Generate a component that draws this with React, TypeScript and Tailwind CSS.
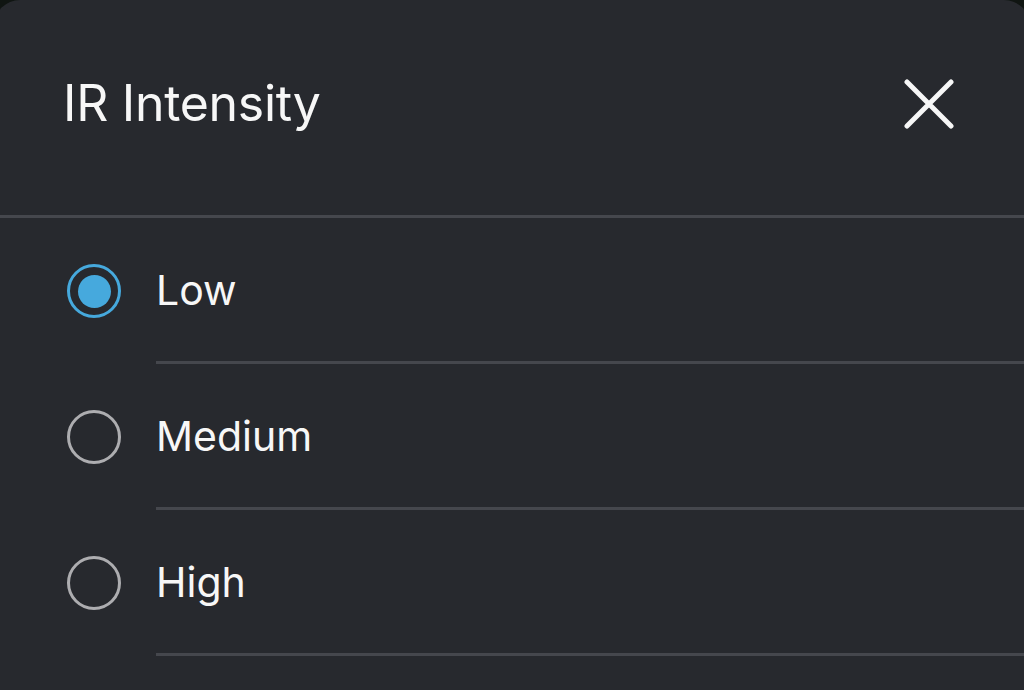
import React from 'react';

const options = ['Low', 'Medium', 'High'];

function Radio({ checked }: { checked: boolean }) {
  if (checked) {
    return <div className="w-[54px] h-[54px] rounded-full border-[3px] border-[#46a9dd] flex items-center justify-center">
        <div className="w-[33px] h-[33px] rounded-full bg-[#46a9dd]" />
      </div>;
  }
  return <div className="w-[54px] h-[54px] rounded-full border-[3px] border-[#adadb0]" />;
}

export default function App() {
  const selected = 'Low';
  return <div className="w-[1024px] h-[690px] overflow-hidden bg-[#101512]">
      <div className="w-[1036px] -ml-[6px] h-[700px] bg-[#27292e] rounded-t-[26px] text-[#f7f7f7]" style={{ fontFamily: 'Inter, "Noto Sans", sans-serif' }}>
        <div className="h-[215px] flex items-center justify-between pl-[69px] pr-[76px] pb-[8px]">
          <h1 className="text-[50px] font-normal tracking-[-0.3px]">IR Intensity</h1>
          <button className="w-[50px] h-[50px] flex items-center justify-center">
            <svg width="50" height="50" viewBox="0 0 50 50" fill="none" stroke="#f7f7f7" strokeWidth="5" strokeLinecap="round">
              <path d="M3 3 L47 47 M47 3 L3 47" />
            </svg>
          </button>
        </div>
        <div className="h-[3px] bg-[#45474d]" />
        <div className="pl-[73px]">
          {options.map(o => <div key={o} className="flex items-center h-[146px]">
              <Radio checked={o === selected} />
              <div className="ml-[35px] flex-1 h-full flex flex-col">
                <div className="flex-1 flex items-center pt-[1px]">
                  <span className="text-[41px] leading-none">{o}</span>
                </div>
                <div className="h-[3px] bg-[#45474d]" />
              </div>
            </div>)}
        </div>
      </div>
    </div>;
}
